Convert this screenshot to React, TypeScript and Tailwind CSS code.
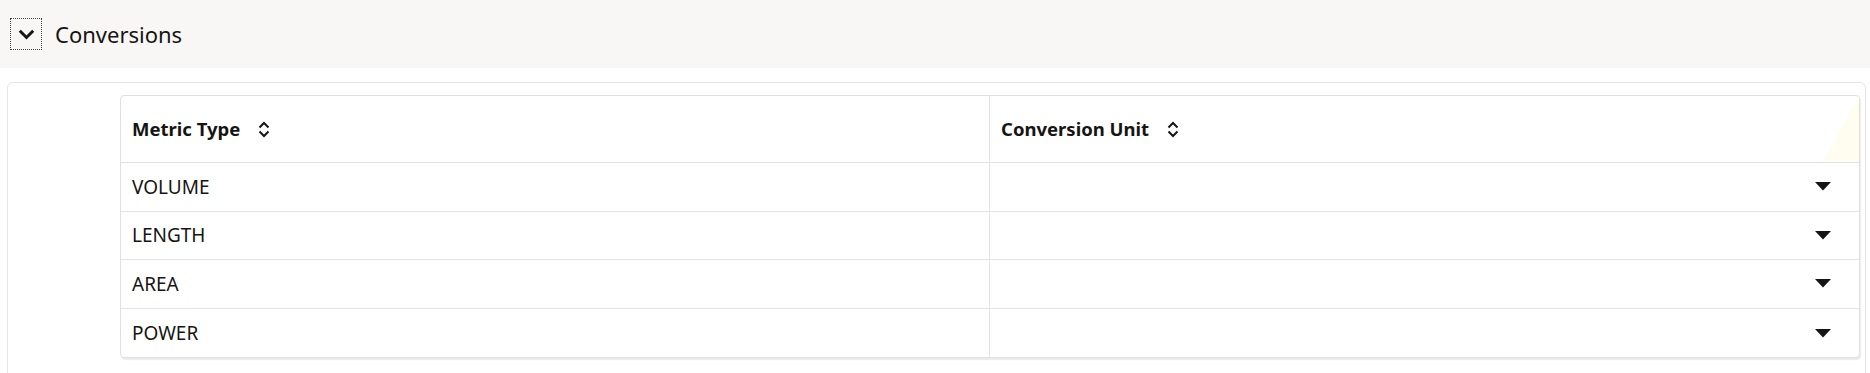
import { useState } from "react";

const rows = ["VOLUME", "LENGTH", "AREA", "POWER"];

function SortIcon() {
  return (
    <svg width="12" height="17" viewBox="0 0 12 17" fill="none" stroke="#161513" strokeWidth="2">
      <path d="M1.5 6.5 6 2l4.5 4.5" />
      <path d="M1.5 10.5 6 15l4.5-4.5" />
    </svg>
  );
}

function Caret() {
  return (
    <svg width="16" height="9" viewBox="0 0 16 9">
      <path d="M0 0h16L8 8.5z" fill="#161513" />
    </svg>
  );
}

export default function App() {
  const [open, setOpen] = useState(true);

  return (
    <main className="w-full h-[373px] bg-white font-['Noto_Sans',sans-serif] text-[#161513] overflow-hidden">
      <div className="h-[68px] bg-[#f8f7f5] flex items-center pl-[10px] gap-[13px]">
        <button
          onClick={() => setOpen(!open)}
          className="w-[32px] h-[32px] flex items-center justify-center border border-dotted border-[#444]"
        >
          <svg width="17" height="11" viewBox="0 0 17 11" fill="none" stroke="#161513" strokeWidth="3">
            <path d="M1.8 1.8 8.5 8.5l6.7-6.7" />
          </svg>
        </button>
        <span className="text-[22px] leading-none">Conversions</span>
      </div>

      <div className="mt-[14px] ml-[7px] mr-[4px] h-[320px] rounded-[6px] border border-[#e4e4e4] pt-[12px] pl-[112px] pr-[5px]">
        {open && (
          <div className="rounded-[4px] border border-[#e0e0e0] shadow-[1px_2px_1px_rgba(0,0,0,0.08)] bg-white text-[19px]">
            <div className="grid grid-cols-[868px_1fr] h-[67px] border-b border-[#e3e3e3] text-[18.5px]">
              <div className="flex items-center gap-[18px] px-[11px] font-bold">
                <span>Metric Type</span>
                <SortIcon />
              </div>
              <div className="relative flex items-center gap-[18px] px-[11px] font-bold border-l border-[#e3e3e3]">
                <span>Conversion Unit</span>
                <SortIcon />
                <div className="absolute right-0 top-0 h-full w-[36px] bg-[linear-gradient(to_top_left,#fffdf0_50%,transparent_50%)]" />
              </div>
            </div>
            {rows.map((r, i) => (
              <div
                key={r}
                className={`grid grid-cols-[868px_1fr] h-[48.6px] ${i < rows.length - 1 ? "border-b border-[#e3e3e3]" : ""}`}
              >
                <div className="flex items-center px-[11px]">{r}</div>
                <div className="flex items-center justify-end pr-[28px] border-l border-[#e3e3e3]">
                  <Caret />
                </div>
              </div>
            ))}
          </div>
        )}
      </div>
    </main>
  );
}
